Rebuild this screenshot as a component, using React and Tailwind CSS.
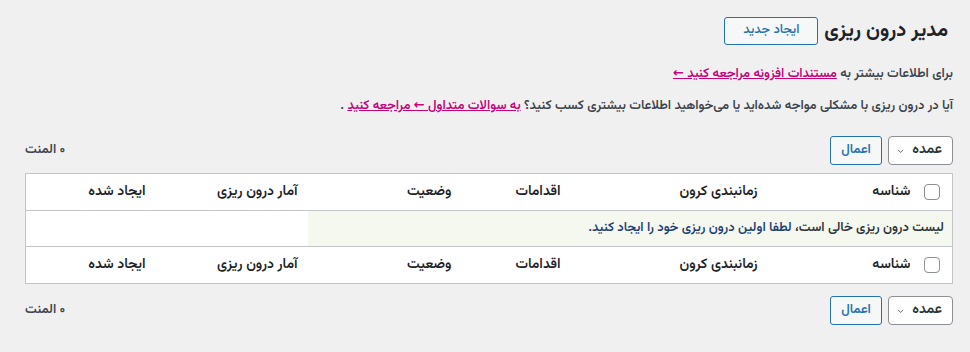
import { useState } from "react";

const font = {
  fontFamily: '"Vazirmatn", "Noto Sans Arabic", "DejaVu Sans", sans-serif',
};

const columns = [
  { label: "شناسه", w: "w-[153px]" },
  { label: "زمانبندی کرون", w: "w-[197px]" },
  { label: "اقدامات", w: "w-[109px]" },
  { label: "وضعیت", w: "w-[154px]" },
  { label: "آمار درون ریزی", w: "w-[152px]" },
  { label: "ایجاد شده", w: "" },
];

function Checkbox() {
  return (
    <span className="block w-[16px] h-[16px] border border-[#8c8f94] rounded-[4px] bg-white" />
  );
}

function Tablenav() {
  return (
    <div className="flex items-center justify-between h-[29px]">
      <div className="flex items-center gap-[6px]">
        <button className="flex items-center gap-[8px] h-[29px] pr-[10px] pl-[8px] w-[65px] border border-[#8c8f94] rounded-[4px] bg-white text-[14px] text-[#2c3338] font-semibold">
          <span>عمده</span>
          <svg width="12" height="12" viewBox="0 0 10 10" className="mr-auto">
            <path d="M1.5 3.5 L5 7 L8.5 3.5" fill="none" stroke="#50575e" strokeWidth="1.2" />
          </svg>
        </button>
        <button className="h-[29px] w-[52px] border border-[#2271b1] rounded-[3px] bg-[#f6f7f7] text-[13px] text-[#2271b1] font-semibold">
          اعمال
        </button>
      </div>
      <span className="text-[13px] text-[#3c434a] font-semibold">۰ المنت</span>
    </div>
  );
}

function HeadRow({ top }) {
  return (
    <tr className={top ? "border-b border-[#c3c4c7]" : "border-t border-[#c3c4c7]"}>
      <td className="w-[32px] h-[37px] pr-[12px] align-middle">
        <Checkbox />
      </td>
      {columns.map((c) => (
        <th
          key={c.label}
          className={`${c.w} h-[37px] px-[10px] text-right text-[14px] font-semibold text-[#1d2327] align-middle`}
        >
          {c.label}
        </th>
      ))}
    </tr>
  );
}

export default function App() {
  const [items] = useState([]);

  return (
    <div dir="rtl" style={font} className="w-[970px] h-[352px] bg-[#f0f0f1] pr-[17px] pl-[25px] text-[#3c434a] overflow-hidden">
      <div className="flex items-center gap-[6px] pt-[17px] pr-[5px]">
        <h1 className="text-[20px] leading-[28px] font-bold text-[#1d2327]">مدیر درون ریزی</h1>
        <button className="h-[28px] w-[94px] border border-[#2271b1] rounded-[3px] bg-[#f6f7f7] text-[13px] text-[#2271b1] font-medium">
          ایجاد جدید
        </button>
      </div>

      <p className="mt-[19px] text-[13px] leading-[21px] font-semibold">
        برای اطلاعات بیشتر به{" "}
        <a href="#" className="text-[#c5037d] underline">
          مستندات افزونه مراجعه کنید ←
        </a>
      </p>
      <p className="mt-[11px] text-[13px] leading-[21px] font-semibold">
        آیا در درون ریزی با مشکلی مواجه شده‌اید یا می‌خواهید اطلاعات بیشتری کسب کنید؟{" "}
        <a href="#" className="text-[#c5037d] underline">
          به سوالات متداول ← مراجعه کنید
        </a>{" "}
        .
      </p>

      <div className="mt-[19px]">
        <Tablenav />
      </div>

      <table className="mt-[8px] w-full table-fixed border border-[#c3c4c7] bg-white border-collapse">
        <thead>
          <HeadRow top />
        </thead>
        <tbody>
          {items.length === 0 && (
            <tr>
              <td colSpan={5} className="h-[36px] pr-[8px] bg-[#f5f8ef] text-[13px] font-semibold align-middle">
                <span className="text-[#2c3338]">لیست درون ریزی خالی است، </span>
                <span className="text-[#1e3f73]">لطفا اولین درون ریزی خود را ایجاد کنید.</span>
              </td>
              <td colSpan={2} />
            </tr>
          )}
        </tbody>
        <tfoot>
          <HeadRow />
        </tfoot>
      </table>

      <div className="mt-[12px]">
        <Tablenav />
      </div>
    </div>
  );
}
